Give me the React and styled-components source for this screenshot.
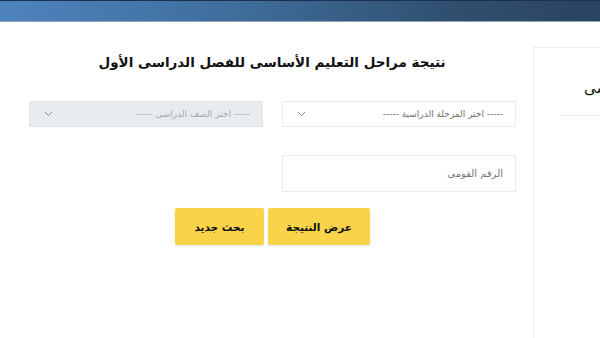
import React from 'react';
import styled, { createGlobalStyle } from 'styled-components';

const GlobalStyle = createGlobalStyle`
  html, body {
    margin: 0;
    padding: 0;
    background: #ffffff;
    overflow: hidden;
  }
  body {
    font-family: "DejaVu Sans", "Noto Sans", sans-serif;
  }
`;

// Top gradient strip
const TopBar = styled.div`
  height: 22px;
  border-top: 1px solid #1c3150;
  border-bottom: 1px solid #8fa6b8;
  box-sizing: border-box;
  background: linear-gradient(90deg, #4d83bd 0%, #3f6d9b 40%, #30506f 75%, #2a4360 100%);
`;

const Main = styled.div`
  display: flex;
  align-items: flex-start;
  width: 600px;
  padding-left: 28px;
  box-sizing: border-box;
`;

const FormColumn = styled.div`
  width: 488px;
  flex-shrink: 0;
  display: flex;
  flex-direction: column;
  direction: rtl;
`;

const Title = styled.h1`
  margin: 28px 0 0;
  height: 24px;
  font-size: 13.5px;
  font-weight: bold;
  color: #111;
  text-align: center;
  line-height: 24px;
`;

const FieldRow = styled.div`
  display: grid;
  grid-template-columns: 234px 234px;
  column-gap: 19px;
  margin-top: ${p => p.$top}px;
`;

const SelectBox = styled.div`
  height: 26px;
  box-sizing: border-box;
  border: 1px solid ${p => (p.$disabled ? '#e3e6ea' : '#ebebeb')};
  background: ${p => (p.$disabled ? '#e9ecef' : '#ffffff')};
  display: flex;
  align-items: center;
  justify-content: space-between;
  padding: 0 12px 0 14px;
  font-size: 9px;
  color: ${p => (p.$disabled ? '#a4a8ad' : '#6f6f6f')};
`;

const Chevron = styled.svg`
  width: 9px;
  height: 6px;
  flex-shrink: 0;
`;

const TextInput = styled.input`
  height: 37px;
  box-sizing: border-box;
  border: 1px solid #ebebeb;
  padding: 0 12px;
  font-family: inherit;
  font-size: 10px;
  direction: rtl;
  outline: none;
  &::placeholder {
    color: #777;
  }
`;

const Buttons = styled.div`
  display: flex;
  justify-content: center;
  gap: 4px;
  margin-top: 16px;
  padding-left: 1px;
`;

const Button = styled.button`
  width: ${p => p.$w}px;
  height: 37px;
  border: none;
  border-radius: 2px;
  background: #f9d44b;
  box-shadow: 0 1px 2px rgba(0, 0, 0, 0.12);
  font-family: inherit;
  font-weight: bold;
  font-size: 10.5px;
  color: #111;
  cursor: pointer;
`;

// Side panel, its right part lies past the window edge
const SidePanel = styled.div`
  width: 67px;
  height: 291px;
  flex-shrink: 0;
  margin-left: 17px;
  margin-top: 25px;
  border: 1px solid #eeeeee;
  border-right: none;
  border-bottom: none;
  box-sizing: border-box;
  overflow: hidden;
`;

const SideHeading = styled.div`
  width: max-content;
  direction: rtl;
  padding-left: 50px;
  margin-top: 30px;
  font-size: 15px;
  line-height: 20px;
  color: #111;
  white-space: nowrap;
`;

const SideDivider = styled.div`
  margin: 17px 0 0 27px;
  height: 1px;
  background: #f0f0f0;
`;

const ChevronIcon = () => (
  <Chevron viewBox="0 0 9 6">
    <path d="M1 1l3.5 3.5L8 1" fill="none" stroke="#8a8a8a" strokeWidth="1" />
  </Chevron>
);

export default function App() {
  return (
    <>
      <GlobalStyle />
      <TopBar />
      <Main>
        <FormColumn>
          <Title>نتيجة مراحل التعليم الأساسى للفصل الدراسى الأول</Title>
          <FieldRow $top={27}>
            <SelectBox>
              <span>----- اختر المرحلة الدراسية -----</span>
              <ChevronIcon />
            </SelectBox>
            <SelectBox $disabled>
              <span>----- اختر الصف الدراسى -----</span>
              <ChevronIcon />
            </SelectBox>
          </FieldRow>
          <FieldRow $top={28}>
            <TextInput placeholder="الرقم القومى" />
          </FieldRow>
          <Buttons>
            <Button $w={102}>عرض النتيجة</Button>
            <Button $w={89}>بحث جديد</Button>
          </Buttons>
        </FormColumn>
        <SidePanel>
          <SideHeading>الدراسى</SideHeading>
          <SideDivider />
        </SidePanel>
      </Main>
    </>
  );
}
